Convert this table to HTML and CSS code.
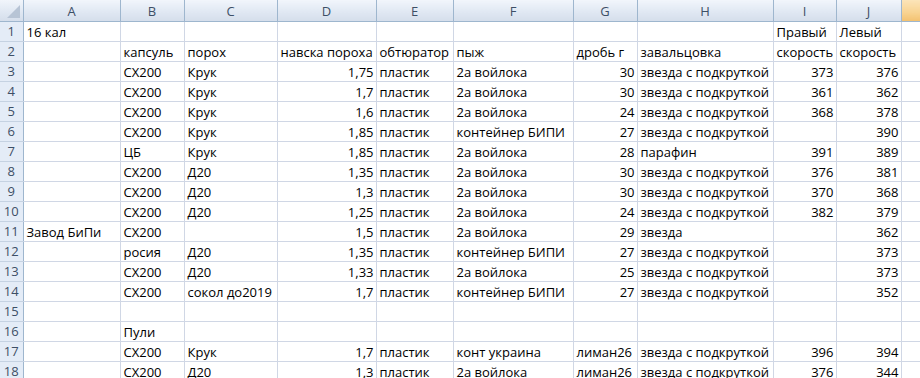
FILE: index.html
```html
<!DOCTYPE html>
<html lang="ru">
<head>
<meta charset="utf-8">
<link rel="stylesheet" href="styles.css">
</head>
<body>
<table class="sheet">
<colgroup>
<col class="c-rh"><col class="c-a"><col class="c-b"><col class="c-c"><col class="c-d"><col class="c-e"><col class="c-f"><col class="c-g"><col class="c-h"><col class="c-i"><col class="c-j"><col class="c-k">
</colgroup>
<thead>
<tr class="hdr">
<th class="corner"><span class="tri"></span></th><th>A</th><th>B</th><th>C</th><th>D</th><th>E</th><th>F</th><th>G</th><th>H</th><th>I</th><th>J</th><th class="sel"></th>
</tr>
</thead>
<tbody>
<tr><th>1</th><td>16 кал</td><td></td><td></td><td></td><td></td><td></td><td></td><td></td><td>Правый</td><td>Левый</td><td class="k"></td></tr>
<tr><th>2</th><td></td><td>капсуль</td><td>порох</td><td>навска пороха</td><td>обтюратор</td><td>пыж</td><td>дробь г</td><td>завальцовка</td><td>скорость</td><td>скорость</td><td class="k"></td></tr>
<tr><th>3</th><td></td><td>СХ200</td><td>Крук</td><td class="n">1,75</td><td>пластик</td><td>2а войлока</td><td class="n">30</td><td>звезда с подкруткой</td><td class="n">373</td><td class="n">376</td><td class="k"></td></tr>
<tr><th>4</th><td></td><td>СХ200</td><td>Крук</td><td class="n">1,7</td><td>пластик</td><td>2а войлока</td><td class="n">30</td><td>звезда с подкруткой</td><td class="n">361</td><td class="n">362</td><td class="k"></td></tr>
<tr><th>5</th><td></td><td>СХ200</td><td>Крук</td><td class="n">1,6</td><td>пластик</td><td>2а войлока</td><td class="n">24</td><td>звезда с подкруткой</td><td class="n">368</td><td class="n">378</td><td class="k"></td></tr>
<tr><th>6</th><td></td><td>СХ200</td><td>Крук</td><td class="n">1,85</td><td>пластик</td><td>контейнер БИПИ</td><td class="n">27</td><td>звезда с подкруткой</td><td></td><td class="n">390</td><td class="k"></td></tr>
<tr><th>7</th><td></td><td>ЦБ</td><td>Крук</td><td class="n">1,85</td><td>пластик</td><td>2а войлока</td><td class="n">28</td><td>парафин</td><td class="n">391</td><td class="n">389</td><td class="k"></td></tr>
<tr><th>8</th><td></td><td>СХ200</td><td>Д20</td><td class="n">1,35</td><td>пластик</td><td>2а войлока</td><td class="n">30</td><td>звезда с подкруткой</td><td class="n">376</td><td class="n">381</td><td class="k"></td></tr>
<tr><th>9</th><td></td><td>СХ200</td><td>Д20</td><td class="n">1,3</td><td>пластик</td><td>2а войлока</td><td class="n">30</td><td>звезда с подкруткой</td><td class="n">370</td><td class="n">368</td><td class="k"></td></tr>
<tr><th>10</th><td></td><td>СХ200</td><td>Д20</td><td class="n">1,25</td><td>пластик</td><td>2а войлока</td><td class="n">24</td><td>звезда с подкруткой</td><td class="n">382</td><td class="n">379</td><td class="k"></td></tr>
<tr><th>11</th><td>Завод БиПи</td><td>СХ200</td><td></td><td class="n">1,5</td><td>пластик</td><td>2а войлока</td><td class="n">29</td><td>звезда</td><td></td><td class="n">362</td><td class="k"></td></tr>
<tr><th>12</th><td></td><td>росия</td><td>Д20</td><td class="n">1,35</td><td>пластик</td><td>контейнер БИПИ</td><td class="n">27</td><td>звезда с подкруткой</td><td></td><td class="n">373</td><td class="k"></td></tr>
<tr><th>13</th><td></td><td>СХ200</td><td>Д20</td><td class="n">1,33</td><td>пластик</td><td>2а войлока</td><td class="n">25</td><td>звезда с подкруткой</td><td></td><td class="n">373</td><td class="k"></td></tr>
<tr><th>14</th><td></td><td>СХ200</td><td>сокол до2019</td><td class="n">1,7</td><td>пластик</td><td>контейнер БИПИ</td><td class="n">27</td><td>звезда с подкруткой</td><td></td><td class="n">352</td><td class="k"></td></tr>
<tr><th>15</th><td></td><td></td><td></td><td></td><td></td><td></td><td></td><td></td><td></td><td></td><td class="k"></td></tr>
<tr><th>16</th><td></td><td>Пули</td><td></td><td></td><td></td><td></td><td></td><td></td><td></td><td></td><td class="k"></td></tr>
<tr><th>17</th><td></td><td>СХ200</td><td>Крук</td><td class="n">1,7</td><td>пластик</td><td>конт украина</td><td>лиман26</td><td>звезда с подкруткой</td><td class="n">396</td><td class="n">394</td><td class="k"></td></tr>
<tr><th>18</th><td></td><td>СХ200</td><td>Д20</td><td class="n">1,3</td><td>пластик</td><td>2а войлока</td><td>лиман26</td><td>звезда с подкруткой</td><td class="n">376</td><td class="n">344</td><td class="k"></td></tr>
</tbody>
</table>
</body>
</html>
```

FILE: styles.css
```css
html, body {
  margin: 0;
  padding: 0;
  background: #ffffff;
  overflow: hidden;
}

.sheet {
  border-collapse: collapse;
  table-layout: fixed;
  width: 950px;
  font-family: "Open Sans", "Noto Sans", sans-serif;
  font-size: 13px;
  color: #000000;
}

.c-rh { width: 23px; }
.c-a { width: 97px; }
.c-b { width: 64px; }
.c-c { width: 93px; }
.c-d { width: 99px; }
.c-e { width: 77px; }
.c-f { width: 120px; }
.c-g { width: 64px; }
.c-h { width: 136px; }
.c-i { width: 63px; }
.c-j { width: 65px; }
.c-k { width: 49px; }

.sheet td {
  height: 19px;
  padding: 0 2px 0 3px;
  border: 1px solid #d0d7e5;
  white-space: nowrap;
  overflow: hidden;
  vertical-align: bottom;
  line-height: 18px;
}

.sheet td.n {
  text-align: right;
  padding-right: 2px;
}

.hdr th {
  height: 21px;
  padding: 0;
  font-weight: normal;
  color: #3d4f66;
  text-align: center;
  background: linear-gradient(#f1f5fb, #dfe7f2 60%, #d5deeb);
  border: 1px solid #9eb6ce;
  border-top: 0;
  line-height: 20px;
}

.hdr th.sel {
  background: linear-gradient(#fbe4b9, #f8d391 60%, #f3c271);
  border-left-color: #c5a76d;
}

.hdr th.corner {
  position: relative;
  border-left: 0;
}

.tri {
  position: absolute;
  right: 3px;
  bottom: 3px;
  width: 0;
  height: 0;
  border-left: 13px solid transparent;
  border-bottom: 13px solid #b7c4d5;
}

tbody th {
  height: 19px;
  padding: 0;
  font-weight: normal;
  color: #3d4f66;
  text-align: center;
  background: #e4ecf7;
  border: 1px solid #9eb6ce;
  border-left: 0;
  border-top-color: #c5d2e2;
  border-bottom-color: #c5d2e2;
  line-height: 19px;
}
```
